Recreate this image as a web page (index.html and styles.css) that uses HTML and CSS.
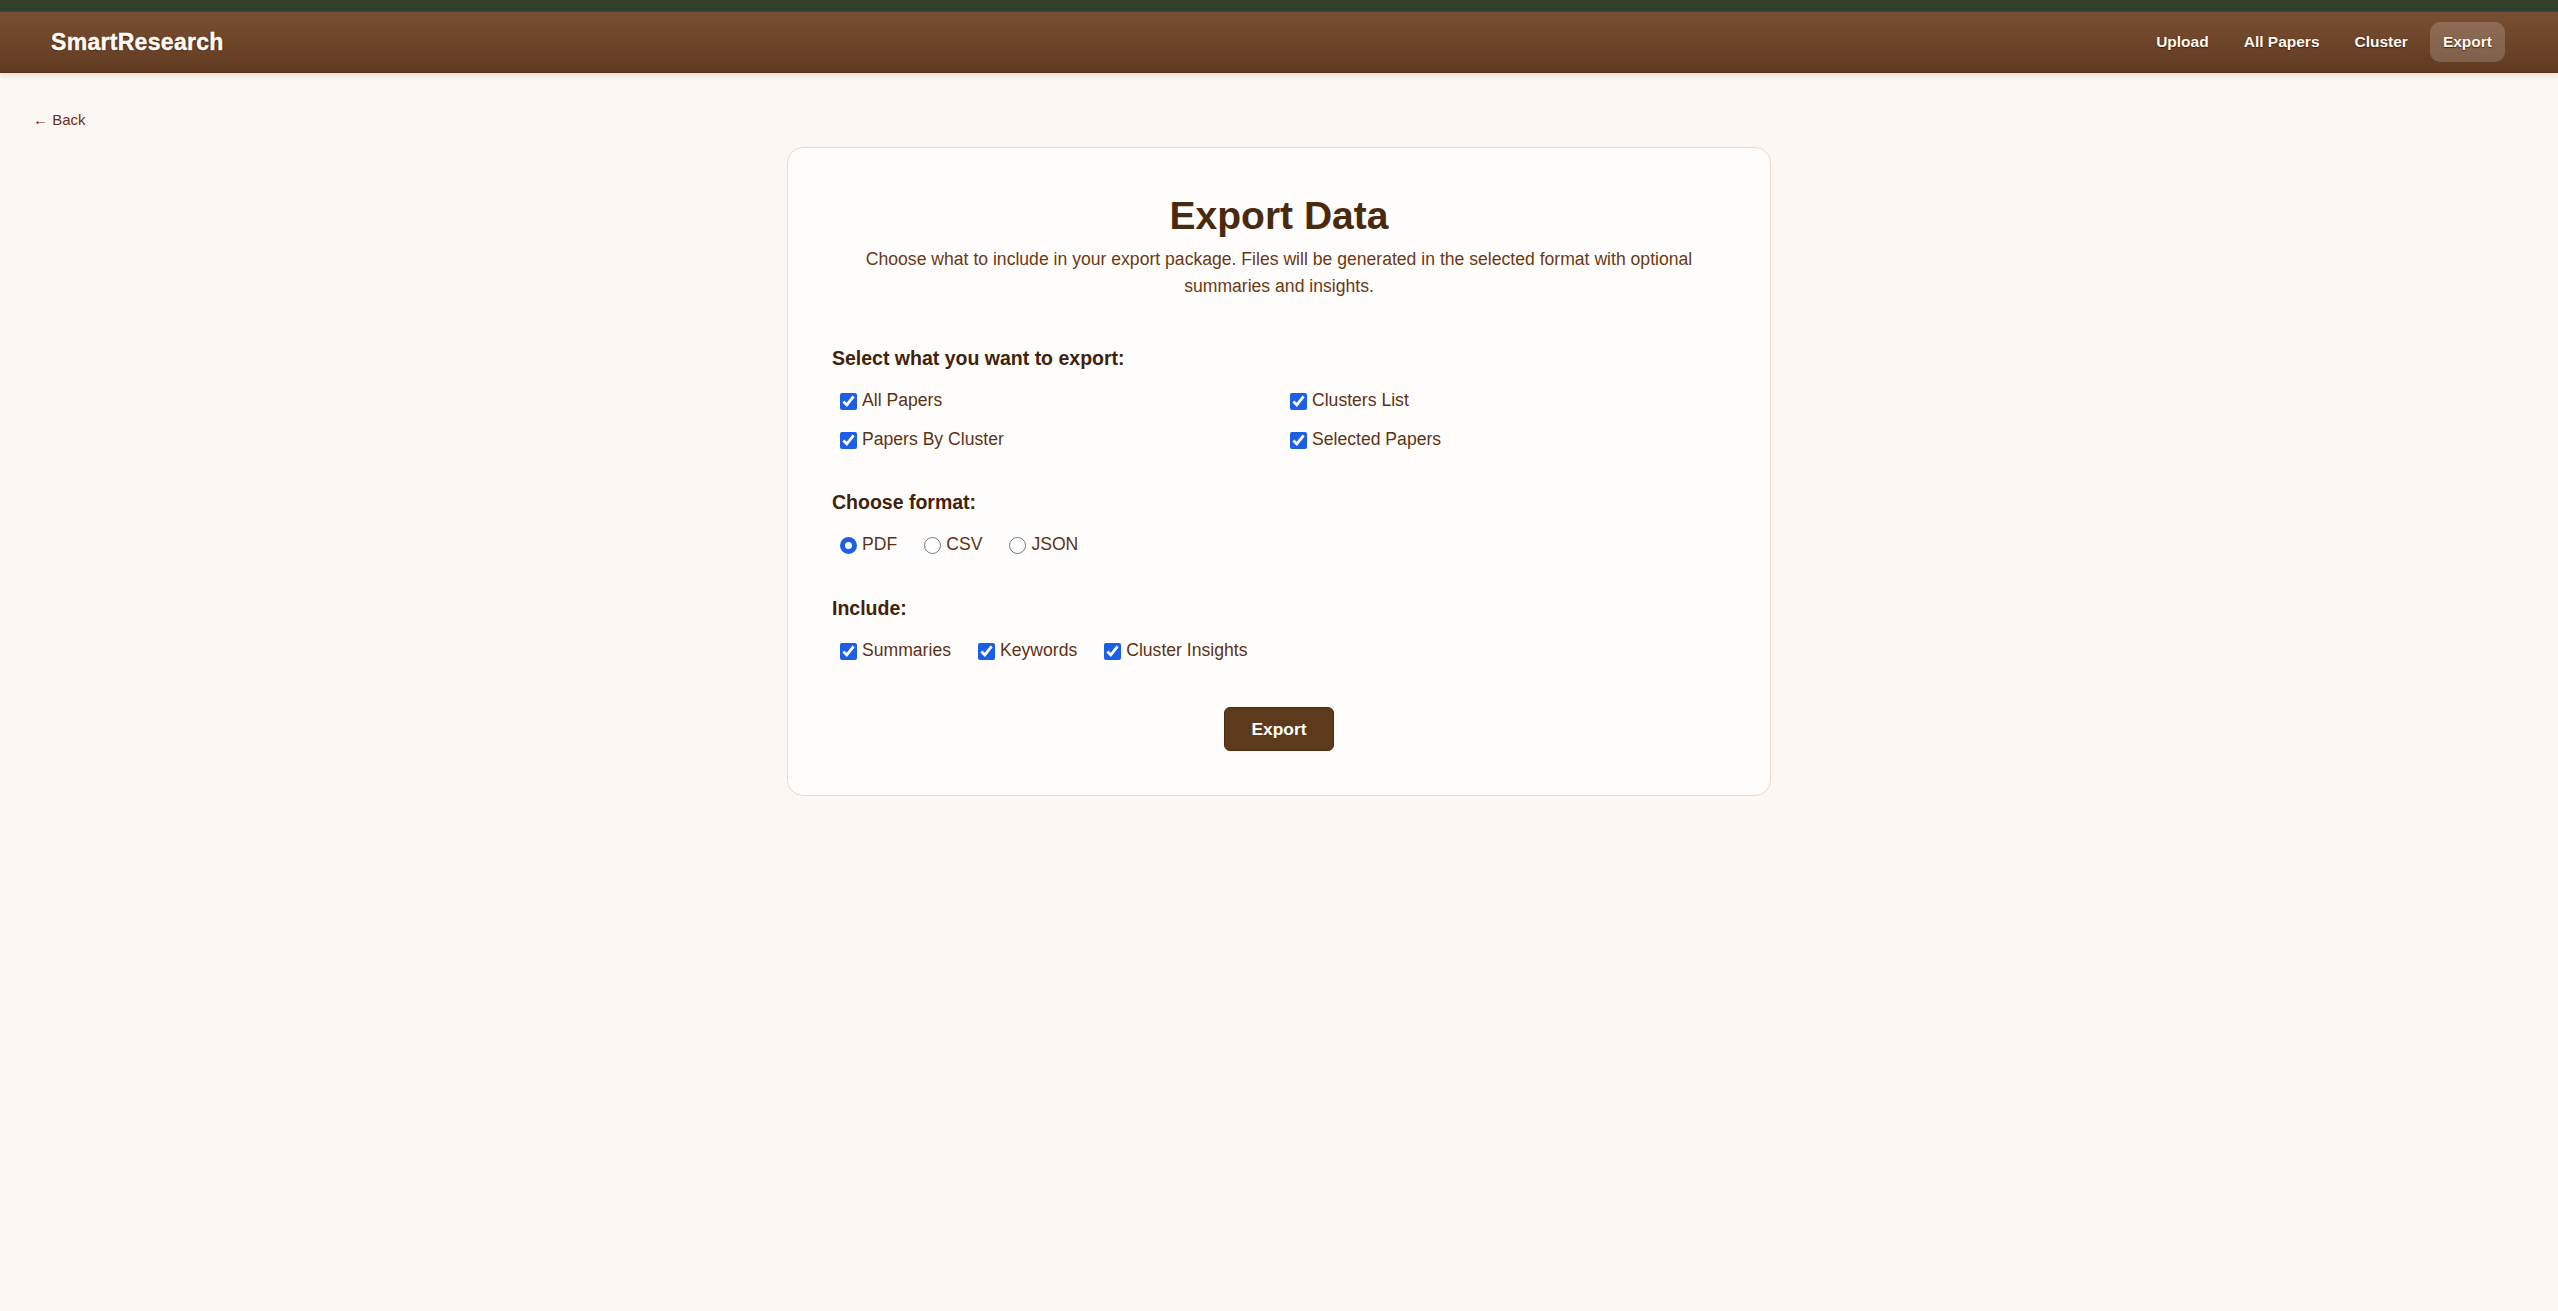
FILE: index.html
```html
<!DOCTYPE html>
<html lang="en">
<head>
<meta charset="utf-8">
<title>SmartResearch – Export Data</title>
<link rel="stylesheet" href="styles.css">
</head>
<body>
<div class="topbar"></div>
<header class="header">
  <div class="logo">SmartResearch</div>
  <nav class="nav">
    <a class="nav-link" href="#">Upload</a>
    <a class="nav-link" href="#">All Papers</a>
    <a class="nav-link" href="#">Cluster</a>
    <a class="nav-link active" href="#">Export</a>
  </nav>
</header>
<main class="page">
  <div class="back-row"><a class="back" href="#">← Back</a></div>
  <section class="card">
    <h1 class="title">Export Data</h1>
    <p class="subtitle">Choose what to include in your export package. Files will be generated in the selected format with optional summaries and insights.</p>

    <div class="group first">
      <h2 class="group-title">Select what you want to export:</h2>
      <div class="options grid">
        <label class="option"><input type="checkbox" checked>All Papers</label>
        <label class="option"><input type="checkbox" checked>Clusters List</label>
        <label class="option"><input type="checkbox" checked>Papers By Cluster</label>
        <label class="option"><input type="checkbox" checked>Selected Papers</label>
      </div>
    </div>

    <div class="group second">
      <h2 class="group-title">Choose format:</h2>
      <div class="options inline">
        <label class="option"><input class="radio" type="radio" name="format" checked>PDF</label>
        <label class="option"><input class="radio" type="radio" name="format">CSV</label>
        <label class="option"><input class="radio" type="radio" name="format">JSON</label>
      </div>
    </div>

    <div class="group third">
      <h2 class="group-title">Include:</h2>
      <div class="options inline">
        <label class="option"><input type="checkbox" checked>Summaries</label>
        <label class="option"><input type="checkbox" checked>Keywords</label>
        <label class="option"><input type="checkbox" checked>Cluster Insights</label>
      </div>
    </div>

    <div class="actions">
      <button class="export-btn" type="button">Export</button>
    </div>
  </section>
</main>
</body>
</html>
```
FILE: styles.css
```css
* { box-sizing: border-box; }

html, body {
  margin: 0;
  padding: 0;
}

body {
  background: #fcf7f3;
  font-family: "Liberation Sans", Arial, sans-serif;
  color: #5c3216;
  min-height: 100vh;
}

.topbar {
  height: 12px;
  background: #333e2c;
  border-bottom: 2px solid #2e4a43;
}

.header {
  display: flex;
  justify-content: space-between;
  align-items: center;
  height: 61px;
  padding: 0 53px 0 51px;
  background: linear-gradient(180deg, #7a4e33 0%, #6d4529 50%, #603b22 100%);
  border-bottom: 1px solid #5a2f16;
  box-shadow: 0 2px 6px rgba(60, 30, 10, 0.14);
  position: relative;
}

.logo {
  font-size: 23px;
  font-weight: 700;
  letter-spacing: 0.3px;
  color: #fff9f1;
  -webkit-text-stroke: 0.5px #fff9f1;
  text-shadow: 0 1px 1px rgba(50, 20, 5, 0.8), 1px 0 1px rgba(50, 20, 5, 0.5), -1px 0 1px rgba(50, 20, 5, 0.4);
}

.nav {
  display: flex;
  gap: 9px;
  align-items: center;
}

.nav-link {
  font-size: 15.5px;
  font-weight: 700;
  line-height: 18px;
  padding: 11px 13px;
  color: #fff9f1;
  text-decoration: none;
  border-radius: 10px;
  text-shadow: 0 1px 1px rgba(50, 20, 5, 0.7), 0 0 1px rgba(50, 20, 5, 0.6);
}

.nav-link.active {
  background: rgba(255, 255, 255, 0.18);
}

.page {
  padding: 38px 33px 40px;
}

.back-row {
  line-height: 17px;
}

.back {
  font-size: 15px;
  color: #6d2c12;
  text-decoration: none;
}

.card {
  width: 984px;
  margin: 19px auto 0;
  background: #fffdfb;
  border: 1px solid #ead9c8;
  border-radius: 16px;
  padding: 44px 44px 44px;
}

.title {
  margin: 0;
  text-align: center;
  font-size: 39px;
  line-height: 48px;
  font-weight: 700;
  color: #4a2a0f;
}

.subtitle {
  margin: 6px 0 0;
  text-align: center;
  font-size: 17.6px;
  line-height: 27px;
  color: #6b3914;
}

.group.first { margin-top: 47px; }
.group.second { margin-top: 42px; }
.group.third { margin-top: 43px; }

.group-title {
  margin: 0 0 20px;
  font-size: 19.5px;
  line-height: 22px;
  font-weight: 700;
  color: #3f220c;
}

.options {
  padding-left: 8px;
}

.options.grid {
  display: grid;
  grid-template-columns: 1fr 1fr;
  column-gap: 14px;
  row-gap: 18px;
}

.options.inline {
  display: flex;
  gap: 27px;
}

.option {
  display: flex;
  align-items: center;
  font-size: 17.6px;
  line-height: 20px;
  color: #5c3216;
  cursor: pointer;
}

.option input {
  width: 17px;
  height: 17px;
  margin: 4px 5px 0 0;
  accent-color: #1c5fe5;
  flex: none;
}

.option input.radio {
  appearance: none;
  -webkit-appearance: none;
  border-radius: 50%;
  border: 1px solid #6f7885;
  background: #ffffff;
}

.option input.radio:checked {
  border: 5px solid #1c5fe5;
}

.actions {
  display: flex;
  justify-content: center;
  margin-top: 47px;
}

.export-btn {
  font-family: "Liberation Sans", Arial, sans-serif;
  font-size: 17.4px;
  font-weight: 700;
  line-height: 20px;
  padding: 11px 26px;
  color: #ffffff;
  background: #5d3a1b;
  border: 1px solid #4a2a10;
  border-radius: 6px;
  cursor: pointer;
}
```
